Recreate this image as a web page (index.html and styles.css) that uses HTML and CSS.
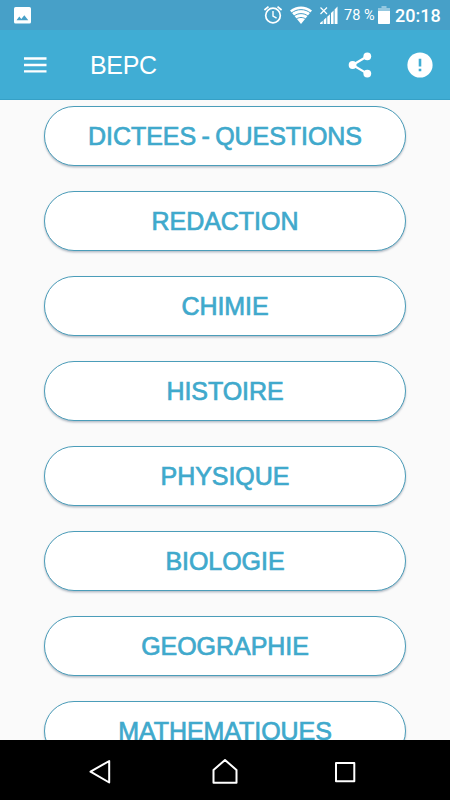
FILE: index.html
```html
<!DOCTYPE html>
<html lang="fr">
<head>
    <meta charset="UTF-8">
    <meta name="viewport" content="width=device-width, initial-scale=1.0">
    <title>BEPC</title>
    <link rel="stylesheet" href="styles.css">
</head>
<body>
    <div class="screen">
        <div class="status-bar">
            <svg class="icon-picture" width="17" height="17" viewBox="0 0 17 17">
                <rect width="17" height="16.5" rx="1.6" fill="#fff"/>
                <path d="M2.5 13.3 5.3 9.6 7.3 12 10.3 8.2 14.3 13.3z" fill="#47a0c8"/>
            </svg>
            <svg width="20" height="20" viewBox="0 0 20 20" fill="none" stroke="#fff">
                <circle cx="10" cy="10.5" r="7.3" stroke-width="1.7"/>
                <path d="M10 6v5l3.6 2.2" stroke-width="1.4"/>
                <path d="M1.4 5 5.5 1.6M18.6 5 14.5 1.6" stroke-width="1.7"/>
            </svg>
            <svg class="icon-wifi" width="22" height="18" viewBox="0 0 22 18">
                <path d="M0 4.6C6.5-1 15.5-1 22 4.6L11 18z" fill="#fff"/>
                <path d="M1.2 7.2C7 2.4 15 2.4 20.8 7.2M3.7 10.3C8 6.7 14 6.7 18.3 10.3M6.1 13.2C9 10.9 13 10.9 15.9 13.2" fill="none" stroke="#47a0c8" stroke-width="1"/>
            </svg>
            <svg class="icon-signal" width="18" height="18" viewBox="0 0 18 18">
                <path d="M.5 1.5 7 8M7 1.5.5 8" stroke="#fff" stroke-width="1.2"/>
                <path d="M0 18v-1l2.7-2.200V18zM3.7 18v-4l2.6-2.500V18zM7.3 18v-7.300l2.6-2.500V18zM11 18V7l2.6-2.600V18zM14.600 18V3.400L17.500.5V18z" fill="#fff"/>
            </svg>
            <span class="battery-level">78 %</span>
            <svg class="icon-battery" width="12" height="18" viewBox="0 0 12 18">
                <path d="M3.500 0h5v2H12v4H0V2h3.500z" fill="#93c8e0"/>
                <path d="M0 5h12v12.200a.8.8 0 0 1-.8.800H.8a.8.8 0 0 1-.8-.8z" fill="#fff"/>
            </svg>
            <span class="clock">20:18</span>
        </div>

        <header class="app-bar">
            <svg class="icon-menu" width="23" height="16" viewBox="0 0 23 16">
                <path d="M0 1.500h22.500M0 8h22.500M0 14.400h22.500" stroke="#fff" stroke-width="2.300"/>
            </svg>
            <h1>BEPC</h1>
            <svg class="icon-share" width="24" height="26" viewBox="0 0 24 26">
                <path d="M19.300 4.300 4.600 13 19.300 21.600" fill="none" stroke="#fff" stroke-width="2.200"/>
                <g fill="#fff">
                    <circle cx="19.300" cy="4.300" r="3.900"/>
                    <circle cx="4.600" cy="13" r="3.900"/>
                    <circle cx="19.300" cy="21.600" r="3.900"/>
                </g>
            </svg>
            <svg width="26" height="26" viewBox="0 0 26 26">
                <circle cx="13" cy="13" r="12.600" fill="#fff"/>
                <path d="M11.700 6.800h2.600v7.600h-2.600zM11.700 16.700h2.600v2.600h-2.600z" fill="#40add4"/>
            </svg>
        </header>

        <main class="subjects">
            <button class="btn">DICTEES - QUESTIONS</button>
            <button class="btn">REDACTION</button>
            <button class="btn">CHIMIE</button>
            <button class="btn">HISTOIRE</button>
            <button class="btn">PHYSIQUE</button>
            <button class="btn">BIOLOGIE</button>
            <button class="btn">GEOGRAPHIE</button>
            <button class="btn">MATHEMATIQUES</button>
        </main>

        <nav class="nav-bar">
            <svg width="24" height="26" viewBox="0 0 24 26">
                <path d="M21.200 2v21.500L2.500 12.700z"/>
            </svg>
            <svg class="icon-home" width="26" height="26" viewBox="0 0 26 26">
                <path d="M1.500 23.700V11L13 1l11.500 10v12.700z"/>
            </svg>
            <svg width="24" height="26" viewBox="0 0 24 26">
                <path d="M3 4h18.300v18.300H3z"/>
            </svg>
        </nav>
    </div>
</body>
</html>
```
FILE: styles.css
```css
body {
    margin: 0;
    font-family: "Liberation Sans", Arial, sans-serif;
    background-color: #fafafa;
}

.screen {
    display: flex;
    flex-direction: column;
    width: 450px;
    height: 800px;
    overflow: hidden;
}

svg {
    display: block;
    flex: none;
}

.status-bar {
    display: flex;
    flex: none;
    align-items: center;
    box-sizing: border-box;
    height: 30px;
    padding: 0 10px 0 14px;
    background-color: #47a0c8;
    color: #fff;
    font-family: Roboto, sans-serif;
    white-space: nowrap;
}

.icon-picture {
    margin-right: auto;
}

.icon-wifi {
    margin-left: 7px;
}

.icon-signal {
    margin-left: 8px;
}

.battery-level {
    width: 32px;
    margin-left: 6px;
    font-size: 14.5px;
    line-height: 31px;
}

.icon-battery {
    margin-left: 2px;
}

.clock {
    width: 45px;
    margin-left: 5px;
    font-size: 18px;
    font-weight: 500;
    line-height: 31px;
}

.app-bar {
    display: flex;
    flex: none;
    align-items: center;
    box-sizing: border-box;
    height: 70px;
    padding: 0 17px 0 24px;
    border-bottom: 1px solid #36a0c6;
    background-color: #40add4;
    color: #fff;
}

.app-bar h1 {
    margin: 0 auto 0 43px;
    font-size: 25px;
    font-weight: normal;
    letter-spacing: -0.3px;
    line-height: 70px;
}

.icon-share {
    margin-right: 35px;
}

.subjects {
    display: flex;
    flex: 1;
    flex-direction: column;
    align-items: center;
    gap: 25px;
    min-height: 0;
    padding-top: 6px;
    overflow: hidden;
}

.btn {
    flex: none;
    box-sizing: border-box;
    width: 362px;
    height: 60px;
    padding: 0;
    border: 1px solid #4b9db9;
    border-radius: 30px;
    background-color: #fff;
    box-shadow: 0 1.5px 2px rgba(60, 80, 110, 0.35);
    color: #40a9cc;
    font-family: inherit;
    font-size: 25px;
    letter-spacing: -0.05px;
    word-spacing: -1.5px;
    -webkit-text-stroke: 0.7px #40a9cc;
}

.nav-bar {
    display: flex;
    flex: none;
    align-items: center;
    justify-content: space-between;
    box-sizing: border-box;
    height: 60px;
    padding: 3px 93px 0 88px;
    background-color: #000;
}

.icon-home {
    margin-left: 4px;
}

.nav-bar path {
    fill: none;
    stroke: #fff;
    stroke-width: 2;
    stroke-linejoin: round;
}
```
